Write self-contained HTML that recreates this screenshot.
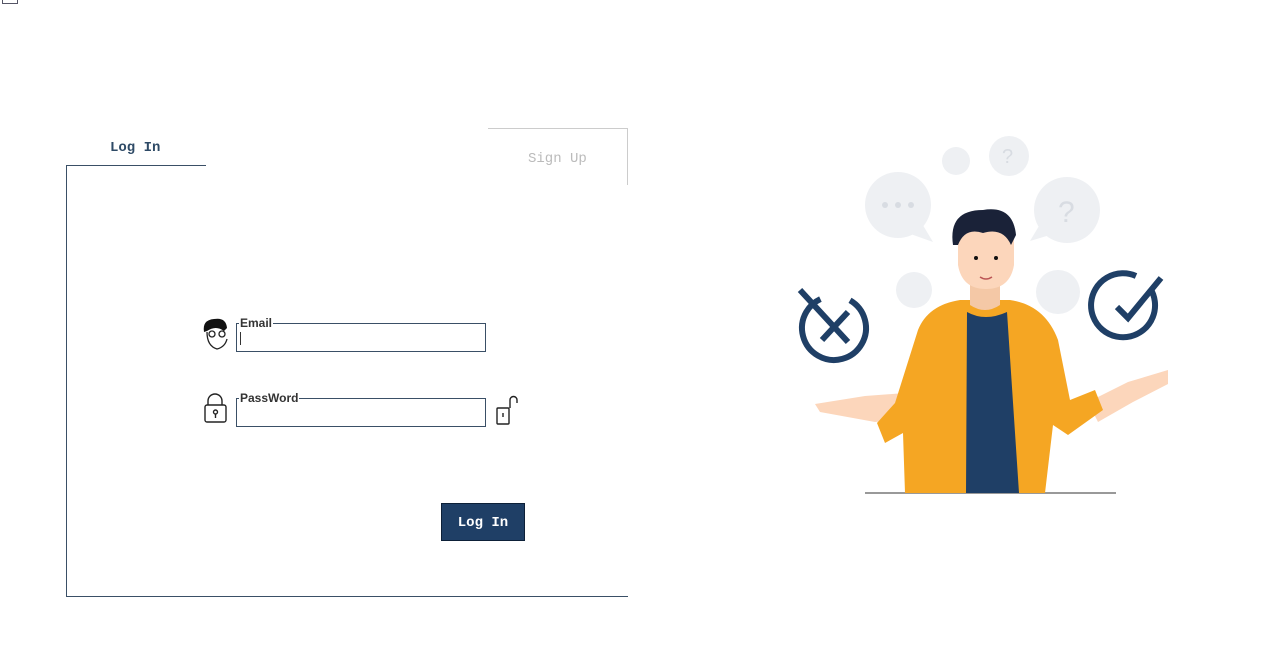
<!DOCTYPE html>
<html><head><meta charset="utf-8"><style>
body{margin:0;width:1280px;height:665px;background:#fff;position:relative;overflow:hidden;font-family:"Liberation Sans",sans-serif}
.a{position:absolute}
.mono{font-family:"Liberation Mono","Courier New",monospace}
fieldset{position:absolute;margin:0;padding:0 4px;border:1px solid #3a4f66}
legend{font-size:12px;font-weight:bold;color:#333;padding:0 1px;margin-left:-2px;line-height:10px}
</style></head><body>
<div class="a" style="left:2px;top:0;width:14px;height:3px;border:1px solid #556;border-top:none"></div>
<div class="a mono" style="left:110px;top:140px;font-size:14px;font-weight:bold;color:#2e4a66">Log In</div>
<div class="a" style="left:66px;top:165px;width:140px;border-top:1px solid #3a4f66"></div>
<div class="a" style="left:66px;top:165px;height:431px;border-left:1px solid #3a4f66"></div>
<div class="a" style="left:66px;top:596px;width:562px;border-top:1px solid #3a4f66"></div>
<div class="a" style="left:488px;top:128px;width:139px;height:56px;border-top:1px solid #ccc;border-right:1px solid #ccc"></div>
<div class="a mono" style="left:528px;top:151px;font-size:14px;color:#bbb">Sign Up</div>

<fieldset style="left:236px;top:318px;width:240px;height:32px"><legend>Email</legend></fieldset>
<div class="a" style="left:240px;top:332px;height:13px;border-left:1px solid #333"></div>
<fieldset style="left:236px;top:393px;width:240px;height:32px"><legend>PassWord</legend></fieldset>

<svg class="a" style="left:0;top:0" width="1280" height="665">
<g fill="none" stroke="#222" stroke-width="1.3">
<path d="M207 332 q0 14 10 17 q8 -2 10 -10"/>
<circle cx="212" cy="334" r="3"/><circle cx="222" cy="334" r="3"/>
</g>
<path d="M204 332 q-2-12 10-13 q12-2 13 9 l-3 3 q-8-6-17 0z" fill="#111"/>
<g fill="none" stroke="#222" stroke-width="1.4">
<path d="M208 405 v-4 a7 7 0 0 1 14 0 v4"/><rect x="205" y="405" width="21" height="17" rx="2"/>
<circle cx="215.5" cy="412" r="2"/><path d="M215.5 414v4"/>
<rect x="497" y="408" width="12" height="16" rx="1"/><path d="M510 408v-8a3.5 3.5 0 0 1 7 0v3"/><path d="M503 413v4"/>
</g>
<g fill="#eef0f3">
<circle cx="898" cy="205" r="33"/><path d="M905 232 l28 10 l-12-20z"/>
<circle cx="956" cy="161" r="14"/><circle cx="1009" cy="156" r="20"/>
<circle cx="1067" cy="210" r="33"/><path d="M1050 235 l-20 6 l12-20z"/>
<circle cx="914" cy="290" r="18"/><circle cx="1058" cy="292" r="22"/>
</g>
<g fill="#d8dce2"><circle cx="885" cy="205" r="3"/><circle cx="898" cy="205" r="3"/><circle cx="911" cy="205" r="3"/></g>
<text x="1002" y="163" font-size="20" fill="#d8dce2">?</text><text x="1058" y="222" font-size="30" fill="#d8dce2">?</text>
<g fill="none" stroke="#1f3f66" stroke-width="6">
<circle cx="834" cy="328" r="32" stroke-dasharray="170 40" transform="rotate(-60 834 328)"/>
<path d="M800 290 l48 52"/><path d="M848 312 l-26 28"/>
<path d="M1150 288 a32 32 0 1 1 -14 -12"/><path d="M1117 307 l11 11 l33-40"/>
</g>
<path d="M865 493 h251" stroke="#999" stroke-width="2"/>
<path d="M815 404 l50-8 l40-3 l15 25 l-45 4 l-55-10z" fill="#fcd6bb"/>
<path d="M1168 370 l-40 12 l-40 20 l10 20 l35-20 l35-18z" fill="#fcd6bb"/>
<path d="M918 330 q10-25 42-30 h50 q35 5 48 40 l12 60 l25 -10 l8 20 l-35 25 l-15 -10 l-8 68 h-140 l-2-60 l-18 10 l-8 -20 l18 -20z" fill="#f5a623"/>
<path d="M967 312 q18 10 40 0 l12 181 h-53z" fill="#1f3f66"/>
<path d="M970 280 h30 v25 q-15 10 -30 0z" fill="#f4c8a6"/>
<path d="M958 235 q0-20 28-20 q28 0 28 20 v30 q-4 24 -28 24 q-24 0 -28-24z" fill="#fcd6bb"/>
<path d="M953 245 q-5-35 30-35 q30-5 33 25 l-5 10 q-8-18-28-12 q-18-6-25 12z" fill="#1a2238"/>
<circle cx="976" cy="258" r="2" fill="#111"/><circle cx="996" cy="258" r="2" fill="#111"/>
<path d="M980 277 q6 4 12 0" stroke="#b55" fill="none" stroke-width="1.5"/>
</svg>

<div class="a mono" style="left:441px;top:503px;width:82px;height:36px;background:#1f3f66;border:1px solid #0d2038;color:#fff;font-size:14px;font-weight:bold;line-height:38px;text-align:center">Log In</div>
</body></html>
